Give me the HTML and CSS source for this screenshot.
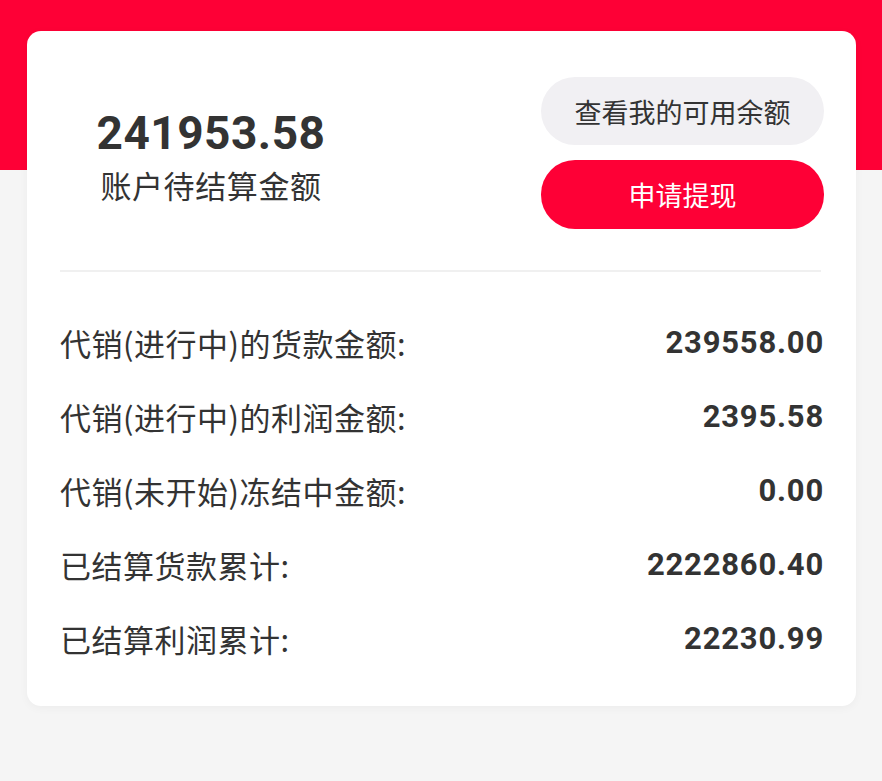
FILE: index.html
```html
<!DOCTYPE html>
<html lang="zh-CN">
<head>
    <meta charset="UTF-8">
    <meta name="viewport" content="width=device-width, initial-scale=1.0">
    <title>账户结算</title>
    <link rel="stylesheet" href="styles.css">
</head>
<body>
    <div class="page">
        <div class="card">
            <div class="summary">
                <div class="pending">
                    <div class="pending-amount">241953.58</div>
                    <div class="pending-label">账户待结算金额</div>
                </div>
                <div class="actions">
                    <button class="btn btn-light">查看我的可用余额</button>
                    <button class="btn btn-primary">申请提现</button>
                </div>
            </div>

            <div class="divider"></div>

            <div class="detail-list">
                <div class="detail-row">
                    <span class="detail-label">代销(进行中)的货款金额:</span>
                    <span class="detail-value">239558.00</span>
                </div>
                <div class="detail-row">
                    <span class="detail-label">代销(进行中)的利润金额:</span>
                    <span class="detail-value">2395.58</span>
                </div>
                <div class="detail-row">
                    <span class="detail-label">代销(未开始)冻结中金额:</span>
                    <span class="detail-value">0.00</span>
                </div>
                <div class="detail-row">
                    <span class="detail-label">已结算货款累计:</span>
                    <span class="detail-value">2222860.40</span>
                </div>
                <div class="detail-row">
                    <span class="detail-label">已结算利润累计:</span>
                    <span class="detail-value">22230.99</span>
                </div>
            </div>
        </div>
    </div>
</body>
</html>
```

FILE: styles.css
```css
:root {
    --red: #fe0036;
    --page-bg: #f5f5f5;
    --text: #333333;
    --gray-btn: #f1f0f3;
    --line: #f0f0f0;
}

* {
    margin: 0;
    padding: 0;
    box-sizing: border-box;
}

body {
    font-family: Roboto, "Noto Sans CJK SC", sans-serif;
    color: var(--text);
    background: var(--page-bg);
}

.page {
    min-height: 781px;
    padding-top: 31px;
    background: linear-gradient(var(--red) 0, var(--red) 170px, var(--page-bg) 170px);
}

.card {
    margin: 0 26px 0 27px;
    background: #fff;
    border-radius: 14px;
    padding: 46px 32px 31px 33px;
    box-shadow: 0 2px 10px rgba(0, 0, 0, 0.04);
}

.summary {
    display: flex;
    justify-content: space-between;
}

.pending {
    width: 302px;
    text-align: center;
    padding-top: 28px;
}

.pending-amount {
    font-size: 46px;
    font-weight: 700;
    line-height: 56px;
    letter-spacing: 0.5px;
}

.pending-label {
    font-family: "Noto Sans CJK SC", sans-serif;
    font-size: 31px;
    line-height: 40px;
    letter-spacing: 0.6px;
    margin-top: 4px;
}

.actions {
    display: flex;
    flex-direction: column;
    gap: 15px;
}

.btn {
    width: 283px;
    height: 68px;
    border: none;
    border-radius: 34px;
    font-family: "Noto Sans CJK SC", sans-serif;
    font-size: 27px;
    cursor: pointer;
}

.btn-light {
    background: var(--gray-btn);
    color: var(--text);
}

.btn-primary {
    background: var(--red);
    color: #fff;
    height: 69px;
}

.divider {
    height: 2px;
    background: var(--line);
    margin: 41px 3px 33px 0;
}

.detail-row {
    height: 74px;
    display: flex;
    justify-content: space-between;
    align-items: center;
}

.detail-label {
    font-family: "Noto Sans CJK SC", sans-serif;
    font-size: 31px;
    letter-spacing: 0.5px;
}

.detail-value {
    font-size: 31px;
    font-weight: 700;
    letter-spacing: 0.8px;
}
```
